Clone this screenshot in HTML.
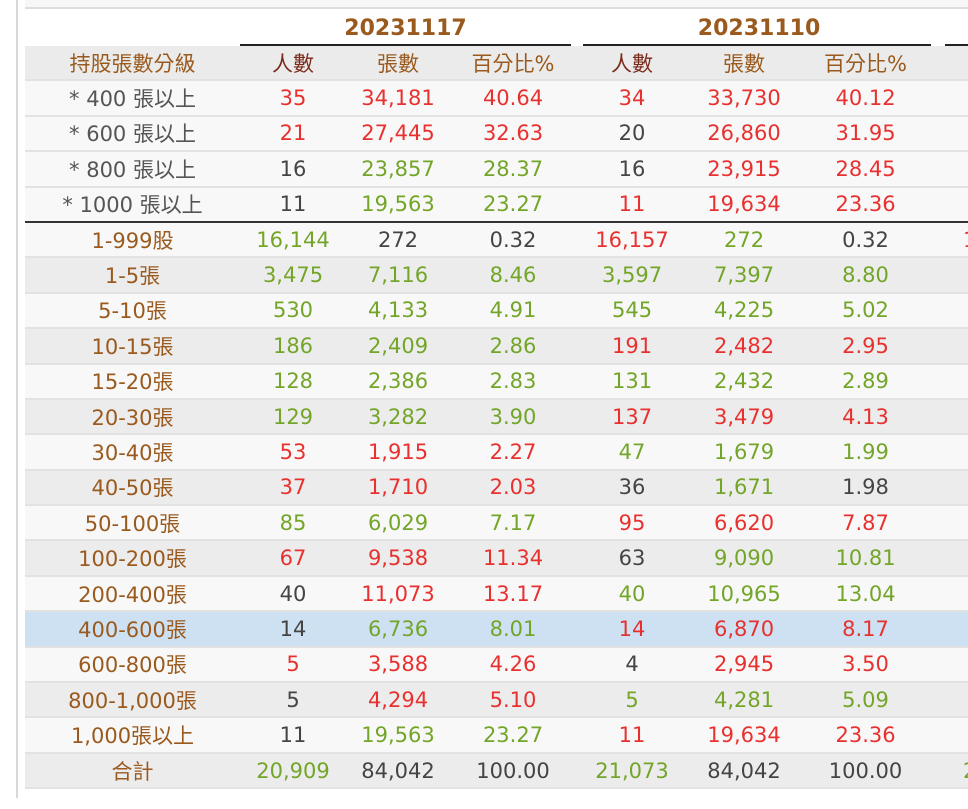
<!DOCTYPE html>
<html><head><meta charset="utf-8"><style>
html,body{margin:0;padding:0;background:#fff;width:968px;height:809px;overflow:hidden;position:relative}
body{font-family:"DejaVu Sans","Liberation Sans","Noto Sans CJK TC",sans-serif;font-size:21px}
.vl{position:absolute;left:16px;top:0;width:2px;height:798px;background:#d8d8d8}
.top{position:absolute;left:25px;top:0;width:943px;height:7px;background:#f7f7f7;border-bottom:2px solid #ddd}
.wrap{position:absolute;left:25px;top:9px;width:943px;height:800px;overflow:hidden}
table{border-collapse:collapse;table-layout:fixed;width:1000px}
td{padding:0;text-align:center;white-space:nowrap;overflow:hidden;height:33.4px;border-bottom:2px solid #e2e2e2;font-family:"DejaVu Sans","Noto Sans CJK TC",sans-serif}
tr.d td{height:37px;border:0;background:#fff;font-weight:bold;color:#9a5a1e;font-size:22px;vertical-align:bottom}
tr.d td div{border-bottom:2px solid #222;height:33px;line-height:36px}
tr.h td{background:#ebebeb;color:#9a5a1e}
tr.h td.p{color:#7a2a1a}
tr.a td{background:#f8f8f8}
tr.b td{background:#ececec}
tr.s td{background:#cde1f3}
tr.k td{border-bottom:2px solid #333}
td.l{color:#9a5a1e}
td.ls{color:#555}
.r{color:#e8312f}.g{color:#73a528}.n{color:#444}
td.x{text-align:left;padding-left:32px}
</style></head><body>
<div class="vl"></div><div class="top"></div>
<div class="wrap">
<table>
<colgroup><col style="width:215px"><col style="width:106px"><col style="width:104px"><col style="width:126px"><col style="width:112px"><col style="width:112px"><col style="width:131px"><col style="width:94px"></colgroup>
<tr class="d"><td></td><td colspan="3"><div style="margin-right:5px">20231117</div></td><td colspan="3"><div style="margin-left:7px;margin-right:-4px">20231110</div></td><td><div style="margin-left:14px"></div></td></tr>
<tr class="h"><td>持股張數分級</td><td class="p">人數</td><td>張數</td><td>百分比%</td><td class="p">人數</td><td>張數</td><td>百分比%</td><td></td></tr>
<tr class="a"><td class="ls">* 400 張以上</td><td class="r">35</td><td class="r">34,181</td><td class="r">40.64</td><td class="r">34</td><td class="r">33,730</td><td class="r">40.12</td><td></td></tr>
<tr class="a"><td class="ls">* 600 張以上</td><td class="r">21</td><td class="r">27,445</td><td class="r">32.63</td><td class="n">20</td><td class="r">26,860</td><td class="r">31.95</td><td></td></tr>
<tr class="a"><td class="ls">* 800 張以上</td><td class="n">16</td><td class="g">23,857</td><td class="g">28.37</td><td class="n">16</td><td class="r">23,915</td><td class="r">28.45</td><td></td></tr>
<tr class="a k"><td class="ls">* 1000 張以上</td><td class="n">11</td><td class="g">19,563</td><td class="g">23.27</td><td class="r">11</td><td class="r">19,634</td><td class="r">23.36</td><td></td></tr>
<tr class="a"><td class="l">1-999股</td><td class="g">16,144</td><td class="n">272</td><td class="n">0.32</td><td class="r">16,157</td><td class="g">272</td><td class="n">0.32</td><td class="x r">16,170</td></tr>
<tr class="b"><td class="l">1-5張</td><td class="g">3,475</td><td class="g">7,116</td><td class="g">8.46</td><td class="g">3,597</td><td class="g">7,397</td><td class="g">8.80</td><td></td></tr>
<tr class="a"><td class="l">5-10張</td><td class="g">530</td><td class="g">4,133</td><td class="g">4.91</td><td class="g">545</td><td class="g">4,225</td><td class="g">5.02</td><td></td></tr>
<tr class="b"><td class="l">10-15張</td><td class="g">186</td><td class="g">2,409</td><td class="g">2.86</td><td class="r">191</td><td class="r">2,482</td><td class="r">2.95</td><td></td></tr>
<tr class="a"><td class="l">15-20張</td><td class="g">128</td><td class="g">2,386</td><td class="g">2.83</td><td class="g">131</td><td class="g">2,432</td><td class="g">2.89</td><td></td></tr>
<tr class="b"><td class="l">20-30張</td><td class="g">129</td><td class="g">3,282</td><td class="g">3.90</td><td class="r">137</td><td class="r">3,479</td><td class="r">4.13</td><td></td></tr>
<tr class="a"><td class="l">30-40張</td><td class="r">53</td><td class="r">1,915</td><td class="r">2.27</td><td class="g">47</td><td class="g">1,679</td><td class="g">1.99</td><td></td></tr>
<tr class="b"><td class="l">40-50張</td><td class="r">37</td><td class="r">1,710</td><td class="r">2.03</td><td class="n">36</td><td class="g">1,671</td><td class="n">1.98</td><td></td></tr>
<tr class="a"><td class="l">50-100張</td><td class="g">85</td><td class="g">6,029</td><td class="g">7.17</td><td class="r">95</td><td class="r">6,620</td><td class="r">7.87</td><td></td></tr>
<tr class="b"><td class="l">100-200張</td><td class="r">67</td><td class="r">9,538</td><td class="r">11.34</td><td class="n">63</td><td class="g">9,090</td><td class="g">10.81</td><td></td></tr>
<tr class="a"><td class="l">200-400張</td><td class="n">40</td><td class="r">11,073</td><td class="r">13.17</td><td class="g">40</td><td class="g">10,965</td><td class="g">13.04</td><td></td></tr>
<tr class="s"><td class="l">400-600張</td><td class="n">14</td><td class="g">6,736</td><td class="g">8.01</td><td class="r">14</td><td class="r">6,870</td><td class="r">8.17</td><td></td></tr>
<tr class="a"><td class="l">600-800張</td><td class="r">5</td><td class="r">3,588</td><td class="r">4.26</td><td class="n">4</td><td class="r">2,945</td><td class="r">3.50</td><td></td></tr>
<tr class="b"><td class="l">800-1,000張</td><td class="n">5</td><td class="r">4,294</td><td class="r">5.10</td><td class="g">5</td><td class="g">4,281</td><td class="g">5.09</td><td></td></tr>
<tr class="a"><td class="l">1,000張以上</td><td class="n">11</td><td class="g">19,563</td><td class="g">23.27</td><td class="r">11</td><td class="r">19,634</td><td class="r">23.36</td><td></td></tr>
<tr class="b"><td class="l">合計</td><td class="g">20,909</td><td class="n">84,042</td><td class="n">100.00</td><td class="g">21,073</td><td class="n">84,042</td><td class="n">100.00</td><td class="x g">21,057</td></tr>
</table>
</div>
</body></html>
